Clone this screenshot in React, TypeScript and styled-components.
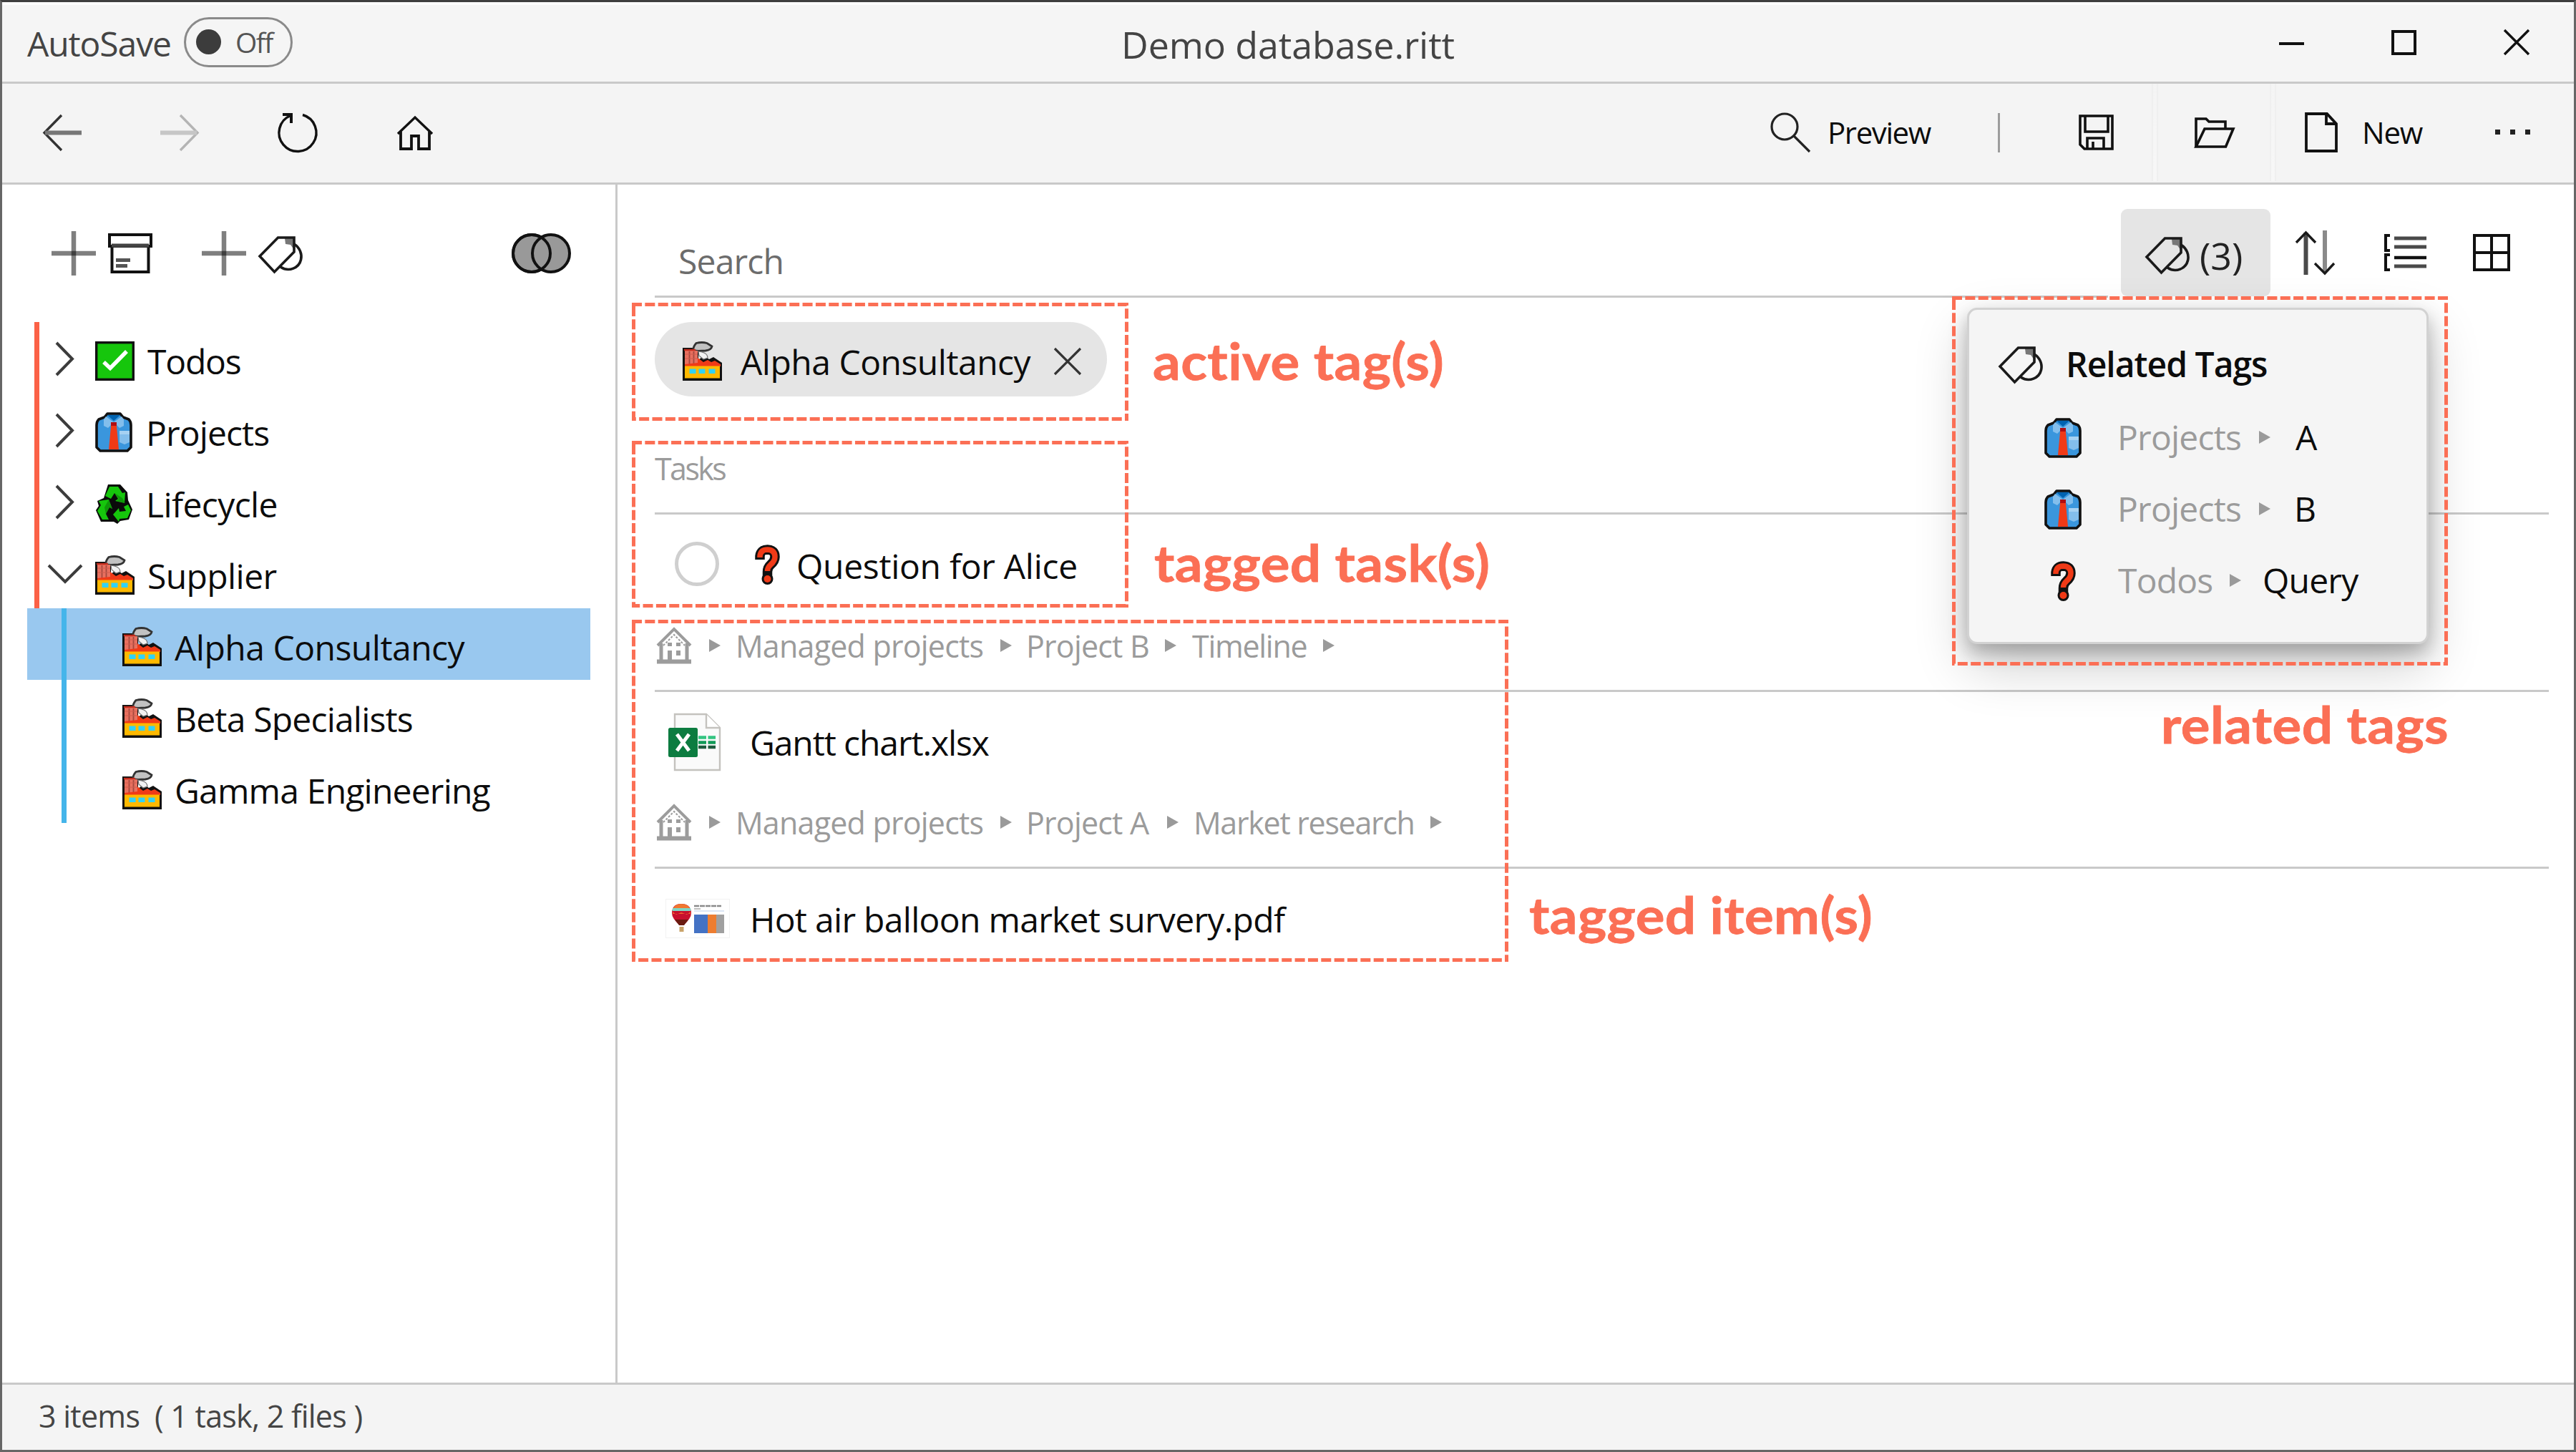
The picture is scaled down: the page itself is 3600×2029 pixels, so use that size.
import React from 'react';
import styled, { createGlobalStyle } from 'styled-components';

const GlobalStyle = createGlobalStyle`
  html, body { margin: 0; padding: 0; }
  body { background: #fff; overflow: hidden; }
  * { box-sizing: border-box; }
  svg { display: block; flex: none; overflow: visible; }
`;

const ui = `'Open Sans', 'Noto Sans', sans-serif`;
const line = '#c9c9c9';
const coral = '#fb6f55';

const Window = styled.div`
  position: relative;
  display: flex;
  flex-direction: column;
  width: 3600px;
  height: 2029px;
  border: 3px solid #666;
  border-top-color: #3e3e3e;
  background: #fff;
  font-family: ${ui};
  overflow: hidden;
`;

const Text = styled.span<{
  $size?: number;
  $color?: string;
  $weight?: number;
  $ml?: number;
  $pt?: number;
  $w?: number;
  $ls?: number;
}>`
  flex: none;
  font-size: ${p => p.$size ?? 48}px;
  line-height: 1.4;
  color: ${p => p.$color ?? '#0c0c0c'};
  font-weight: ${p => p.$weight ?? 400};
  margin-left: ${p => p.$ml ?? 0}px;
  padding-top: ${p => p.$pt ?? 0}px;
  width: ${p => (p.$w ? `${p.$w}px` : 'auto')};
  letter-spacing: ${p => p.$ls ?? -0.6}px;
  white-space: pre;
`;

const Slot = styled.div<{ $ml: number; $top?: number }>`
  flex: none;
  margin-left: ${p => p.$ml}px;
  padding-top: ${p => p.$top ?? 0}px;
`;

/* ---------- title bar ---------- */

const TitleBar = styled.header`
  display: grid;
  grid-template-columns: 1fr auto 1fr;
  align-items: center;
  flex: none;
  height: 114px;
  border-top: 4px solid #fcfcfc;
  border-bottom: 3px solid ${line};
  background: #f5f5f5;
`;

const AutoSave = styled.div`
  display: flex;
  align-items: center;
  padding-left: 35px;
`;

const Toggle = styled.div`
  display: flex;
  align-items: center;
  width: 152px;
  height: 70px;
  margin-left: 17px;
  margin-top: -4px;
  padding-left: 14px;
  border: 3px solid #8a8a8a;
  border-radius: 35px;
`;

const ToggleDot = styled.i`
  width: 35px;
  height: 35px;
  border-radius: 50%;
  background: #3c3c3c;
`;

const WindowButtons = styled.div`
  display: flex;
  justify-content: flex-end;
  align-items: center;
  gap: 122px;
  padding-right: 62px;
  margin-top: -3px;
`;

/* ---------- toolbar ---------- */

const Toolbar = styled.nav`
  display: flex;
  align-items: center;
  flex: none;
  height: 141px;
  padding-bottom: 2px;
  border-bottom: 3px solid ${line};
  background: #f4f4f4;
`;

const Spacer = styled.div`
  flex: 1;
`;

const ToolDivider = styled.i<{ $ml: number; $tall?: boolean }>`
  width: ${p => (p.$tall ? 9 : 3)}px;
  height: ${p => (p.$tall ? 136 : 55)}px;
  margin-left: ${p => p.$ml}px;
  background: ${p => (p.$tall ? 'linear-gradient(#f4f4f4, #f7f7f7)' : '#9c9c9c')};
  border: 0 solid #efefef;
  border-width: ${p => (p.$tall ? '0 2px' : '0')};
`;

/* ---------- sidebar ---------- */

const Body = styled.div`
  display: flex;
  flex: 1;
  min-height: 0;
`;

const Sidebar = styled.aside`
  flex: none;
  width: 860px;
  border-right: 3px solid ${line};
`;

const SidebarTools = styled.div`
  display: flex;
  align-items: center;
  height: 192px;
  padding-left: 69px;
`;

const TreeRow = styled.div<{ $selected?: boolean }>`
  display: flex;
  width: 787px;
  height: 100px;
  margin-left: 35px;
  background: ${p => (p.$selected ? '#99c8ef' : 'transparent')};
`;

const Rail = styled.i<{ $child?: boolean }>`
  flex: none;
  width: 7px;
  height: 100px;
  margin-left: ${p => (p.$child ? 48 : 10)}px;
  background: ${p => (p.$child ? '#45b5ea' : '#fb6146')};
`;

const RowContent = styled.div`
  display: flex;
  align-items: center;
  height: 100px;
  padding-top: 8px;
`;

const ChevronSlot = styled.div`
  display: flex;
  justify-content: center;
  width: 71px;
  margin-bottom: 5px;
`;

/* ---------- main ---------- */

const Main = styled.main`
  flex: 1;
  min-width: 0;
  padding: 0 35px 0 52px;
`;

const SearchRow = styled.div`
  display: flex;
  height: 158px;
`;

const SearchField = styled.div`
  width: 2031px;
  height: 158px;
  padding: 73px 0 0 33px;
  border-bottom: 3px solid ${line};
`;

const RelatedButton = styled.div`
  display: flex;
  align-items: center;
  width: 209px;
  height: 122px;
  margin: 34px 0 0 18px;
  padding: 6px 0 0 34px;
  border-radius: 9px;
  background: #e5e5e5;
`;

const ViewTools = styled.div`
  display: flex;
  align-items: center;
  height: 190px;
`;

const Pill = styled.div`
  display: flex;
  align-items: center;
  width: 632px;
  height: 104px;
  margin-top: 34px;
  padding: 5px 36px 0 39px;
  border-radius: 52px;
  background: #e5e5e5;
`;

const GroupHeader = styled.div<{ $mt?: number }>`
  display: flex;
  align-items: center;
  height: 108px;
  margin-top: ${p => p.$mt ?? 0}px;
  padding-bottom: 19px;
  border-bottom: 3px solid ${line};
`;

const Item = styled.div<{ $h: number }>`
  display: flex;
  align-items: center;
  height: ${p => p.$h}px;
`;

const TaskCircle = styled.i`
  flex: none;
  width: 62px;
  height: 62px;
  margin: 0 0 2px 28px;
  border: 5px solid #cfcfcf;
  border-radius: 50%;
`;

const StatusBar = styled.footer`
  display: flex;
  align-items: center;
  flex: none;
  height: 94px;
  padding: 0 0 2px 51px;
  border-top: 3px solid ${line};
  background: #f4f4f4;
`;

/* ---------- popup and notes ---------- */

const Popup = styled.section`
  position: absolute;
  left: 2746px;
  top: 427px;
  width: 645px;
  height: 470px;
  padding-top: 24px;
  border: 3px solid #d2d2d2;
  border-radius: 14px;
  background: #f5f5f5;
  box-shadow: 0 30px 75px rgba(0, 0, 0, 0.2), 0 12px 26px rgba(0, 0, 0, 0.26);
`;

const PopupRow = styled.div<{ $h: number }>`
  display: flex;
  align-items: center;
  height: ${p => p.$h}px;
`;

const NoteBox = styled.svg<{ $x: number; $y: number }>`
  position: absolute;
  left: ${p => p.$x - 3}px;
  top: ${p => p.$y - 3}px;
`;

const NoteLabel = styled.div<{ $x: number; $base: number }>`
  position: absolute;
  left: ${p => p.$x - 3}px;
  top: ${p => p.$base - 71}px;
  font: 700 70px/84px Lato, sans-serif;
  font-variant-ligatures: none;
  letter-spacing: 0.4px;
  color: ${coral};
  white-space: nowrap;
  transform: scaleX(1.09);
  transform-origin: left;
  -webkit-text-stroke: 0.8px ${coral};
`;

/* ---------- icons ---------- */

const Glyph = ({ w, h, sw = 3.4, color = '#111', children }: {
  w: number; h: number; sw?: number; color?: string; children: React.ReactNode;
}) => (
  <svg width={w} height={h} viewBox={`0 0 ${w} ${h}`} fill="none" stroke={color} strokeWidth={sw}>
    {children}
  </svg>
);

const Plus = () => (
  <Glyph w={62} h={62} sw={6.5} color="#000">
    <path d="M0 31H62" opacity=".5" />
    <path d="M31 0V62" opacity=".5" />
  </Glyph>
);

const Archive = () => (
  <Glyph w={62} h={56} sw={4}>
    <path d="M2 2H60V18H2Z" />
    <path d="M5.500 18V54H56.500V18" />
    <path d="M11 37.500H31M11 45.500H27" stroke="#555" strokeWidth="5" />
    <path d="M5 17H57" strokeWidth="5" stroke="#444" />
  </Glyph>
);

const TagIcon = () => (
  <Glyph w={62} h={51} sw={3.6} color="#1a1a1a">
    <path d="M37 3H50V19L45 12L38 11Z" fill="#777" stroke="none" />
    <path d="M27.500 2H50V22L22.500 50L2 28Z" />
    <path d="M50 11C58 16 61.500 25 59.500 33C57 44 43 51 31 43" />
  </Glyph>
);

const Venn = () => (
  <Glyph w={83} h={56} sw={4}>
    <g fill="#999">
      <circle cx="28" cy="28" r="26" />
      <circle cx="55" cy="28" r="26" />
    </g>
    <circle cx="28" cy="28" r="26" />
  </Glyph>
);

const BackArrow = ({ forward }: { forward?: boolean }) => (
  <Glyph w={54} h={51} sw={3.4} color={forward ? '#b4b4b4' : '#333'}>
    <g transform={forward ? 'matrix(-1 0 0 1 54 0)' : undefined}>
      <path d="M26 1L2 25.500L26 50" />
      <path d="M3 25.500H54" strokeWidth="6" stroke={forward ? '#c6c6c6' : '#777'} />
    </g>
  </Glyph>
);

const Refresh = () => (
  <Glyph w={56} h={57}>
    <path d="M36 3.500A26 26 0 1 1 19 4.500" />
    <path d="M8 3H20V15" strokeWidth="4" />
  </Glyph>
);

const Home = () => (
  <Glyph w={50} h={48}>
    <path d="M1 25L25 2L49 25" />
    <path d="M5 22V46H20V28H30V46H45V22" strokeWidth="3.800" />
  </Glyph>
);

const Magnifier = () => (
  <Glyph w={56} h={57} sw={3.2} color="#222">
    <circle cx="20" cy="20" r="18" />
    <path d="M33 33L55 55" />
  </Glyph>
);

const Save = () => (
  <Glyph w={49} h={50} sw={3.6}>
    <path d="M2 2H47V48H8L2 42Z" />
    <path d="M9 2V24H41V2" />
    <path d="M12 48V33H35V48M20 38V48" />
  </Glyph>
);

const Folder = () => (
  <Glyph w={56} h={43} sw={3.6}>
    <path d="M2 41V2H16L20 6H43V16" />
    <path d="M2 41L14 16H54L43.500 41Z" />
  </Glyph>
);

const NewFile = () => (
  <Glyph w={46} h={56} sw={3.8}>
    <path d="M2 2H31L44 16V54H2Z" />
    <path d="M30 2V16H44" />
  </Glyph>
);

const Dots = () => (
  <svg width="50" height="8" fill="#222">
    <rect width="7" height="7" />
    <rect x="21" width="7" height="7" />
    <rect x="42" width="7" height="7" />
  </svg>
);

const Sort = () => (
  <Glyph w={57} h={62} color="#1a1a1a">
    <path d="M15.500 3V62" strokeWidth="6" stroke="#4a4a4a" />
    <path d="M2 17L15.500 3L29 17" />
    <path d="M42 0V59" strokeWidth="6" stroke="#8a8a8a" />
    <path d="M28 46L42 60L55 46" />
  </Glyph>
);

const ListIcon = () => (
  <Glyph w={60} h={52} sw={4}>
    <path d="M9 2H3V23H9M9 29H3V50H9" />
    <path d="M15 6H60M15 18H60M15 45H60" stroke="#4a4a4a" strokeWidth="5" />
    <path d="M15 33H60" strokeWidth="4.500" />
  </Glyph>
);

const GridIcon = () => (
  <Glyph w={52} h={52} sw={4}>
    <path d="M2 2H50V50H2ZM26 2V50M2 26H50" />
  </Glyph>
);

const ChevronRight = () => (
  <Glyph w={25} h={47} sw={4} color="#3c3c3c"><path d="M1 1L23 23.500L1 46" /></Glyph>
);

const ChevronDown = () => (
  <Glyph w={48} h={26} sw={4} color="#3c3c3c"><path d="M1 1L24 24L47 1" /></Glyph>
);

const Cross = ({ s, color = '#111', sw = 3.4 }: { s: number; color?: string; sw?: number }) => (
  <Glyph w={s} h={s} sw={sw} color={color}><path d={`M1 1L${s - 1} ${s - 1}M${s - 1} 1L1 ${s - 1}`} /></Glyph>
);

const Caret = ({ ml }: { ml: number }) => (
  <Slot $ml={ml}>
    <svg width="16" height="18"><path d="M0 0L16 9L0 18Z" fill="#9a9a9a" /></svg>
  </Slot>
);

const CheckEmoji = () => (
  <svg width="55" height="55" viewBox="0 0 55 55">
    <rect x="1.700" y="1.700" width="51.600" height="51.600" fill="#16c60c" stroke="#111" strokeWidth="3.400" />
    <path d="M12 29L21 37.500L44 14" fill="none" stroke="#fff" strokeWidth="5.500" />
  </svg>
);

const ShirtEmoji = () => (
  <svg width="52" height="56" viewBox="0 0 52 56">
    <path d="M17 2H35L39 7L47 10Q50 13 50 18V49L45 54H7L2 49V18Q2 13 5 10L13 7Z" fill="#3a96dd" stroke="#111" strokeWidth="3.600" strokeLinejoin="round" />
    <path d="M17 4H35L26 12Z" fill="#0063b1" />
    <path d="M15 6L26 14L18 22L12 19L12 10ZM37 6L26 14L34 22L40 19L40 10Z" fill="#83beec" />
    <path d="M22 15H30L30 20L33 52H19L22 20Z" fill="#f03a17" />
    <path d="M22 14H30L30 19H22Z" fill="#b00d12" />
    <path d="M34 26H48V42L41 45L34 42Z" fill="#83beec" />
    <path d="M34 26H48V31H34Z" fill="#a6d1f2" />
  </svg>
);

const RecycleEmoji = () => (
  <svg width="52" height="56" viewBox="0 0 52 56">
    <path d="M18 1H35L45 12L46 23L52 36L47 50L35 52L31 56L26 53H8L1 37L5 31L3 24L12 20Z" fill="#0a0a0a" />
    <path d="M20 4H32L38 13L42 12L41 27L28 24L32 21L27 13L22 21L14 17Z" fill="#16c60c" />
    <path d="M5 24L19 22L24 35L20 33L15 42L19 50H10L3 38L8 30Z" fill="#16c60c" />
    <path d="M25 43L33 34L34 39L43 38L40 32L46 29L50 37L45 48L34 49L33 53Z" fill="#16c60c" />
    <path d="M27 13L33 21L30 24L42 27L38 20ZM19 22L24 35L20 33L15 42L13 33Z" fill="#0b7a08" opacity=".6" />
  </svg>
);

const FactoryEmoji = () => (
  <svg width="55" height="56" viewBox="0 0 55 56">
    <path d="M0 9H22V26L30 20L37 25L43 22L55 30V55H0Z" fill="#111" />
    <path d="M15 13Q14 8 19 2.500Q27 .500 34 2.500L41 7Q40 12 32 13L22 13.500Z" fill="#c2c2c2" stroke="#333" strokeWidth="2.800" />
    <path d="M22 14L27 15Q35 17 35 23L29 25L23 20Z" fill="#f2f2f2" stroke="#777" strokeWidth="1.200" />
    <path d="M3 13H21V33H3Z" fill="#e8705f" />
    <path d="M9.500 14V32M15.500 14V32" stroke="#a4493f" strokeWidth="1.800" />
    <path d="M3 18H21M3 24H21" stroke="#cf5d4f" strokeWidth="1.200" />
    <path d="M2 12H18" stroke="#c42b1c" strokeWidth="2.400" />
    <path d="M3 32L21 30V23L29 29L35 26L40 29L45 27L53 32V35H3Z" fill="#f03a17" />
    <path d="M3 34.500H52V51.500H3Z" fill="#ffb900" />
    <path d="M9.500 38.500H18.500V45H9.500ZM22.500 38.500H31.500V45H22.500ZM36.500 38.500H45.500V45H36.500Z" fill="#31d2f7" />
  </svg>
);

const QuestionEmoji = () => (
  <svg width="35" height="56" viewBox="0 0 35 56" fill="none" strokeLinejoin="round">
    <path d="M7 21V16Q8 7 17.500 7Q28 7.500 28 17Q28 23 22 28Q17.500 32 17.500 38V47" stroke="#111" strokeWidth="13.500" />
    <circle cx="17.500" cy="48" r="8" fill="#111" />
    <path d="M7 18V16Q8 7 17.500 7Q28 7.500 28 17Q28 23 22 28Q17.500 32 17.500 37" stroke="#f03a17" strokeWidth="7.500" />
    <circle cx="17.500" cy="48" r="5" fill="#f03a17" />
  </svg>
);

const CrumbHome = () => (
  <svg width="48" height="51" viewBox="0 0 48 51" fill="none" stroke="#9c9c9c">
    <path d="M1 25L24 2L47 25" strokeWidth="4" />
    <path d="M9 25L24 10L39 25" strokeWidth="2" strokeDasharray="3 2" />
    <path d="M6 22V45M42 22V45" strokeWidth="5" />
    <path d="M0 47.500H48" strokeWidth="6" />
    <path d="M18 32V46M18 21V26M30 21V26M30 32V39" strokeWidth="6" />
  </svg>
);

const ExcelFile = () => (
  <svg width="73" height="82" viewBox="0 0 73 82">
    <path d="M9 2H53L72 21V80H9Z" fill="#fafafa" stroke="#c4c2be" strokeWidth="2.400" />
    <path d="M53 2V21H72" fill="#fff" stroke="#c4c2be" strokeWidth="2.400" />
    <g strokeWidth="4.500">
      <path d="M42 34.500H53M55.500 34.500H66" stroke="#33c481" />
      <path d="M42 41.500H53M55.500 41.500H66" stroke="#109a57" />
      <path d="M42 48H53M55.500 48H66" stroke="#1d5c3d" />
    </g>
    <rect y="21" width="41" height="41" rx="2.500" fill="#0c7c40" />
    <path d="M12 30L29 53M29 30L12 53" stroke="#fff" strokeWidth="5" />
  </svg>
);

const PdfThumb = () => (
  <svg width="90" height="55" viewBox="0 0 90 55">
    <rect x=".500" y=".500" width="89" height="54" fill="#fff" stroke="#f3f3f3" />
    <path d="M9 20Q9 7 22 7Q36 7 36 20Q36 27 26 36H19Q9 27 9 20Z" fill="#c8102e" />
    <path d="M11 13Q14 7 22 7Q31 7 34 13Z" fill="#f07830" />
    <path d="M10 13H35L35.500 17H9.500Z" fill="#7fd6c4" />
    <path d="M10 18L15 22L22 19L30 22L35 18V21H10Z" fill="#f06030" />
    <path d="M13 29H32L26 37H19Z" fill="#6a1a10" />
    <rect x="19.500" y="39" width="6" height="7" fill="#c9a36a" />
    <path d="M40 10H78" stroke="#8a8a8a" strokeWidth="2.600" strokeDasharray="7 1" />
    <path d="M40 14H49" stroke="#aaa" strokeWidth="1.500" />
    <path d="M40 17H82" stroke="#cfdcf2" strokeWidth="1.500" />
    <rect x="40" y="22" width="19" height="26" fill="#4472c4" />
    <rect x="59" y="22" width="12" height="26" fill="#ed7d31" />
    <rect x="71" y="22" width="11" height="26" fill="#a0a0a0" />
  </svg>
);

/* ---------- compositions ---------- */

const Branch = ({ label, icon, open, ls, ml = 17 }: {
  label: string; icon: React.ReactNode; open?: boolean; ls?: number; ml?: number;
}) => (
  <TreeRow>
    <Rail />
    <RowContent>
      <ChevronSlot>{open ? <ChevronDown /> : <ChevronRight />}</ChevronSlot>
      <Slot $ml={7}>{icon}</Slot>
      <Text $ml={ml} $ls={ls} $pt={1}>{label}</Text>
    </RowContent>
  </TreeRow>
);

const Leaf = ({ label, selected, ls }: { label: string; selected?: boolean; ls?: number }) => (
  <TreeRow $selected={selected}>
    <Rail $child />
    <RowContent>
      <Slot $ml={78}><FactoryEmoji /></Slot>
      <Text $ml={18} $ls={ls} $pt={1}>{label}</Text>
    </RowContent>
  </TreeRow>
);

const Note = ({ x, y, w, h }: { x: number; y: number; w: number; h: number }) => (
  <NoteBox $x={x} $y={y} width={w} height={h} fill="none" stroke={coral} strokeWidth="5" strokeDasharray="14 4.350">
    <path d={`M0 2.500H${w - 2.5}V${h}`} />
    <path d={`M2.500 5V${h - 2.5}H${w}`} />
  </NoteBox>
);

const crumb = { $size: 43, $color: '#9b9b9b', $ls: -0.8, $pt: 3 };

export default function App() {
  return (
    <Window>
      <GlobalStyle />
      <TitleBar>
        <AutoSave>
          <Text $color="#444" $w={202} $ls={-1.1} $pt={1}>AutoSave</Text>
          <Toggle>
            <ToggleDot />
            <Text $size={39} $color="#555" $ml={20} $ls={-1.6} $pt={2}>Off</Text>
          </Toggle>
        </AutoSave>
        <Text $size={52} $color="#444" $ls={-0.1} $pt={3}>Demo database.ritt</Text>
        <WindowButtons>
          <Glyph w={35} h={35} sw={4}><path d="M0 19H35" /></Glyph>
          <Glyph w={35} h={35} sw={4}><path d="M2 2H33V33H2Z" /></Glyph>
          <Cross s={36} />
        </WindowButtons>
      </TitleBar>

      <Toolbar>
        <Slot $ml={57}><BackArrow /></Slot>
        <Slot $ml={110}><BackArrow forward /></Slot>
        <Slot $ml={109}><Refresh /></Slot>
        <Slot $ml={112} $top={2}><Home /></Slot>
        <Spacer />
        <Magnifier />
        <Text $size={42} $ml={24} $w={172} $ls={-1.4}>Preview</Text>
        <ToolDivider $ml={66} />
        <Slot $ml={110}><Save /></Slot>
        <ToolDivider $tall $ml={53} />
        <Slot $ml={51}><Folder /></Slot>
        <ToolDivider $tall $ml={49} />
        <Slot $ml={40}><NewFile /></Slot>
        <Text $size={42} $ml={34} $w={90} $ls={-1.2}>New</Text>
        <Slot $ml={96}><Dots /></Slot>
        <Slot $ml={60}>{null}</Slot>
      </Toolbar>

      <Body>
        <Sidebar>
          <SidebarTools>
            <Plus />
            <Slot $ml={17}><Archive /></Slot>
            <Slot $ml={69}><Plus /></Slot>
            <Slot $ml={17} $top={2}><TagIcon /></Slot>
            <Slot $ml={292}><Venn /></Slot>
          </SidebarTools>
          <Branch label="Todos" icon={<CheckEmoji />} ml={18} ls={-1.2} />
          <Branch label="Projects" icon={<ShirtEmoji />} ml={19} ls={-0.9} />
          <Branch label="Lifecycle" icon={<RecycleEmoji />} ml={19} />
          <Branch label="Supplier" icon={<FactoryEmoji />} open ml={18} />
          <Leaf label="Alpha Consultancy" selected ls={-0.5} />
          <Leaf label="Beta Specialists" ls={-0.8} />
          <Leaf label="Gamma Engineering" ls={-0.8} />
        </Sidebar>

        <Main>
          <SearchRow>
            <SearchField>
              <Text $color="#6c6c6c" $ls={-0.8}>Search</Text>
            </SearchField>
            <RelatedButton>
              <TagIcon />
              <Text $size={52} $ml={14} $color="#222" $pt={3} $ls={0}>(3)</Text>
            </RelatedButton>
            <ViewTools>
              <Slot $ml={34}><Sort /></Slot>
              <Slot $ml={67}><ListIcon /></Slot>
              <Slot $ml={65}><GridIcon /></Slot>
            </ViewTools>
          </SearchRow>

          <Pill>
            <FactoryEmoji />
            <Text $ml={26} $pt={2} $ls={-0.5}>Alpha Consultancy</Text>
            <Spacer />
            <Cross s={38} color="#333" sw={3.2} />
          </Pill>

          <GroupHeader $mt={57}>
            <Text {...crumb} $ls={-2.6}>Tasks</Text>
          </GroupHeader>
          <Item $h={140}>
            <TaskCircle />
            <Slot $ml={50}><QuestionEmoji /></Slot>
            <Text $ml={23} $pt={3} $ls={-0.3}>Question for Alice</Text>
          </Item>

          <GroupHeader>
            <Slot $ml={3}><CrumbHome /></Slot>
            <Caret ml={25} />
            <Text {...crumb} $ml={21} $w={349}>Managed projects</Text>
            <Caret ml={21} />
            <Text {...crumb} $ml={20} $w={173}>Project B</Text>
            <Caret ml={21} />
            <Text {...crumb} $ml={22} $w={162} $ls={-1.3}>Timeline</Text>
            <Caret ml={21} />
          </GroupHeader>
          <Item $h={139}>
            <Slot $ml={19}><ExcelFile /></Slot>
            <Text $ml={41} $pt={3} $ls={-1.1}>Gantt chart.xlsx</Text>
          </Item>

          <GroupHeader>
            <Slot $ml={3}><CrumbHome /></Slot>
            <Caret ml={25} />
            <Text {...crumb} $ml={21} $w={349}>Managed projects</Text>
            <Caret ml={21} />
            <Text {...crumb} $ml={20} $w={175}>Project A</Text>
            <Caret ml={22} />
            <Text {...crumb} $ml={21} $w={312} $ls={-1.3}>Market research</Text>
            <Caret ml={19} />
          </GroupHeader>
          <Item $h={139}>
            <Slot $ml={15}><PdfThumb /></Slot>
            <Text $ml={28} $pt={3} $ls={-0.7}>Hot air balloon market survery.pdf</Text>
          </Item>
        </Main>
      </Body>

      <StatusBar>
        <Text $size={43} $color="#444" $ls={-0.75}>3 items  ( 1 task, 2 files )</Text>
      </StatusBar>

      <Popup>
        <PopupRow $h={104}>
          <Slot $ml={41}><TagIcon /></Slot>
          <Text $ml={32} $weight={600} $ls={-1}>Related Tags</Text>
        </PopupRow>
        <PopupRow $h={100}>
          <Slot $ml={105} $top={2}><ShirtEmoji /></Slot>
          <Text $color="#9b9b9b" $ml={50} $w={176} $ls={-0.8}>Projects</Text>
          <Caret ml={22} />
          <Text $ml={35}>A</Text>
        </PopupRow>
        <PopupRow $h={100}>
          <Slot $ml={105} $top={2}><ShirtEmoji /></Slot>
          <Text $color="#9b9b9b" $ml={50} $w={176} $ls={-0.8}>Projects</Text>
          <Caret ml={22} />
          <Text $ml={33}>B</Text>
        </PopupRow>
        <PopupRow $h={100}>
          <Slot $ml={114} $top={2}><QuestionEmoji /></Slot>
          <Text $color="#9b9b9b" $ml={59} $w={135} $ls={-0.8}>Todos</Text>
          <Caret ml={21} />
          <Text $ml={30} $ls={-0.8}>Query</Text>
        </PopupRow>
      </Popup>

      <Note x={883} y={423} w={694} h={165} />
      <Note x={883} y={616} w={694} h={233} />
      <Note x={883} y={866} w={1225} h={478} />
      <Note x={2728} y={414} w={693} h={516} />
      <NoteLabel $x={1611} $base={530}>active tag(s)</NoteLabel>
      <NoteLabel $x={1613} $base={812}>tagged task(s)</NoteLabel>
      <NoteLabel $x={2137} $base={1304}>tagged item(s)</NoteLabel>
      <NoteLabel $x={3020} $base={1038}>related tags</NoteLabel>
    </Window>
  );
}
